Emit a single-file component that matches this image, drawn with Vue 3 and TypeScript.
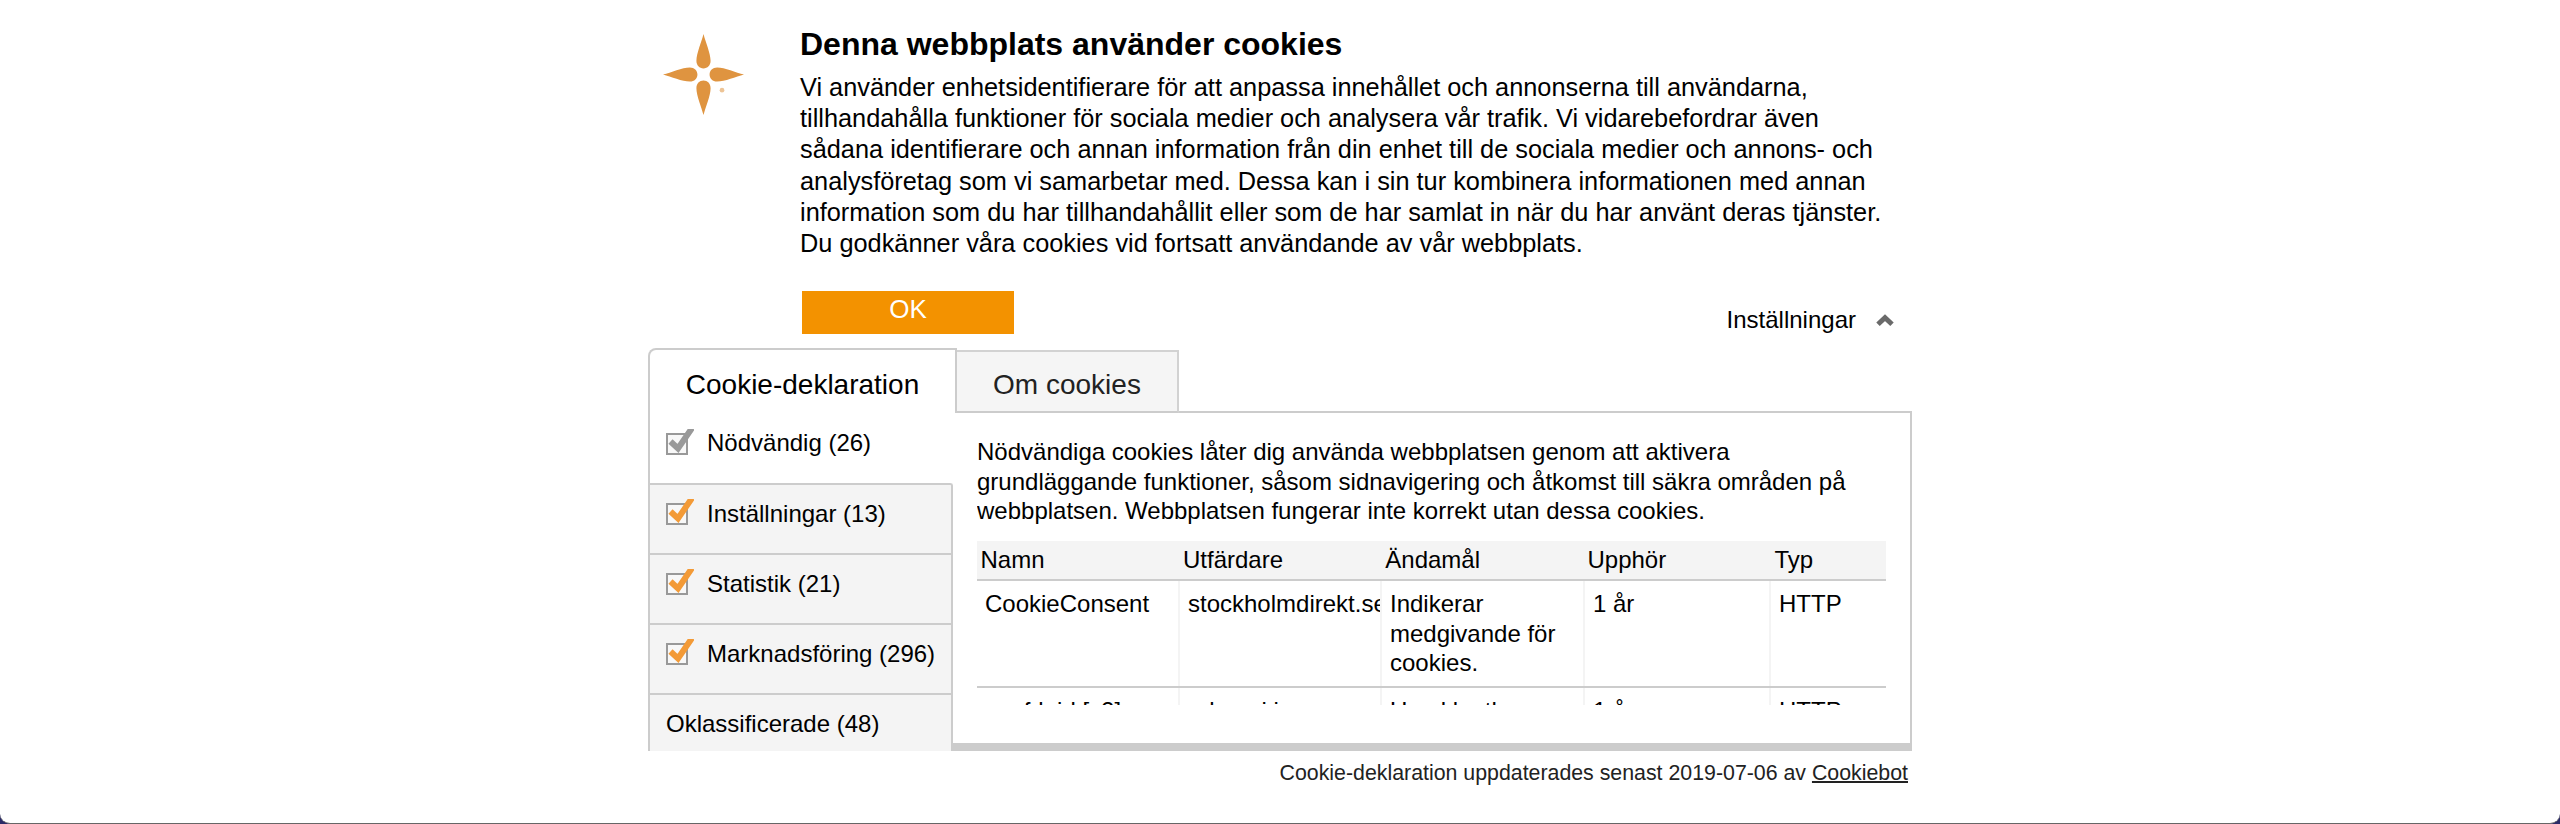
<script setup lang="ts">
interface Category {
  label: string
  state: 'locked' | 'checked' | 'none'
}

const intro: string[] = [
  'Vi använder enhetsidentifierare för att anpassa innehållet och annonserna till användarna,',
  'tillhandahålla funktioner för sociala medier och analysera vår trafik. Vi vidarebefordrar även',
  'sådana identifierare och annan information från din enhet till de sociala medier och annons- och',
  'analysföretag som vi samarbetar med. Dessa kan i sin tur kombinera informationen med annan',
  'information som du har tillhandahållit eller som de har samlat in när du har använt deras tjänster.',
  'Du godkänner våra cookies vid fortsatt användande av vår webbplats.',
]

const categories: Category[] = [
  { label: 'Nödvändig (26)', state: 'locked' },
  { label: 'Inställningar (13)', state: 'checked' },
  { label: 'Statistik (21)', state: 'checked' },
  { label: 'Marknadsföring (296)', state: 'checked' },
  { label: 'Oklassificerade (48)', state: 'none' },
]

const description: string[] = [
  'Nödvändiga cookies låter dig använda webbplatsen genom att aktivera',
  'grundläggande funktioner, såsom sidnavigering och åtkomst till säkra områden på',
  'webbplatsen. Webbplatsen fungerar inte korrekt utan dessa cookies.',
]

const columns: string[] = ['Namn', 'Utfärdare', 'Ändamål', 'Upphör', 'Typ']
const rows: string[][] = [
  ['CookieConsent', 'stockholmdirekt.se', 'Indikerar medgivande för cookies.', '1 år', 'HTTP'],
  ['__cfduid [x2]', 'adnami.io', 'Used by the', '1 år', 'HTTP'],
]
</script>

<template>
  <div class="page">
    <div class="dialog">
      <header class="top">
        <svg class="logo" viewBox="0 0 80 80">
          <g fill="#df9440">
            <path d="M40 0C42 8 47 19 47 26.500C47 31 44 34 40 34S33 31 33 26.500C33 19 38 8 40 0Z" />
            <path d="M40 80C42 72 47 61 47 53.500C47 49 44 46 40 46S33 49 33 53.500C33 61 38 72 40 80Z" />
            <path d="M0 40C8 38 19 33 26.500 33C31 33 34 36 34 40S31 47 26.500 47C19 47 8 42 0 40Z" />
            <path d="M80 40C72 38 61 33 53.500 33C49 33 46 36 46 40S49 47 53.500 47C61 47 72 42 80 40Z" />
            <circle cx="58.300" cy="55.500" r="2.300" opacity=".55" />
          </g>
        </svg>
        <div class="intro">
          <h1>Denna webbplats använder cookies</h1>
          <p><span v-for="line in intro" :key="line" class="line">{{ line }}</span></p>
        </div>
      </header>
      <div class="actions">
        <button class="ok">OK</button>
        <a class="toggle">Inställningar
          <svg viewBox="0 0 20 14"><path d="M3 11.200L10 4.600L17 11.200" fill="none" stroke="#6a6a6a" stroke-width="5" /></svg>
        </a>
      </div>
      <nav class="tabs">
        <div class="tab active">Cookie-deklaration</div>
        <div class="tab">Om cookies</div>
      </nav>
      <section class="body">
        <ul class="categories">
          <li v-for="c in categories" :key="c.label" :class="c.state">
            <svg v-if="c.state !== 'none'" class="check" viewBox="0 0 28 26">
              <rect x="1" y="5" width="20" height="20" fill="#f8f8f8" stroke="#999" stroke-width="2" />
              <path class="tick" d="M4.500 12.500L12 19.500L26 -1" fill="none" stroke-width="6" />
            </svg>
            <span>{{ c.label }}</span>
          </li>
        </ul>
        <div class="detail">
          <div class="scroll">
            <p><span v-for="line in description" :key="line" class="line">{{ line }}</span></p>
            <div class="grid head"><span v-for="c in columns" :key="c">{{ c }}</span></div>
            <div v-for="r in rows" :key="r[0]" class="grid row">
              <span v-for="(cell, i) in r" :key="i">{{ cell }}</span>
            </div>
          </div>
        </div>
      </section>
      <footer>Cookie-deklaration uppdaterades senast 2019-07-06 av <a>Cookiebot</a></footer>
    </div>
  </div>
</template>

<style>
body {
  margin: 0;
  background: #2c2b68;
}
</style>

<style scoped>
.page {
  box-sizing: border-box;
  height: 824px;
  overflow: hidden;
  background: #fff;
  border-bottom: 1px solid #666;
  border-radius: 0 0 10px 10px;
  font: 24px/29.5px "Liberation Sans", Arial, sans-serif;
  color: #000;
}
.dialog {
  width: 1264px;
  margin: 0 auto;
}
.top {
  display: flex;
  height: 291px;
}
.logo {
  width: 81px;
  height: 81px;
  margin: 34px 0 0 15px;
  flex: none;
}
.intro {
  margin-left: 56px;
}
h1 {
  margin: 26px 0 0;
  font-size: 32px;
  line-height: 36px;
  white-space: nowrap;
}
.intro p {
  margin: 10px 0 0;
  font-size: 25.33px;
  line-height: 31.2px;
}
.line {
  display: block;
  white-space: nowrap;
}
.actions {
  display: flex;
  justify-content: space-between;
  height: 57px;
}
.ok {
  width: 212px;
  height: 43px;
  margin-left: 154px;
  padding: 0 0 6px;
  border: 0;
  background: #f39200;
  color: #fff;
  font: 26px/37px "Liberation Sans", Arial, sans-serif;
}
.toggle {
  display: flex;
  align-items: center;
  gap: 19px;
  height: 30px;
  margin: 14px 17px 0 0;
}
.toggle svg {
  width: 20px;
  height: 14px;
}
.tabs {
  display: flex;
  height: 65px;
  align-items: flex-end;
}
.tab {
  box-sizing: border-box;
  width: 222px;
  height: 63px;
  border: 2px solid #d2d2d2;
  border-left: 0;
  border-bottom-color: #ccc;
  background: #f5f5f5;
  color: #222;
  font-size: 28px;
  line-height: 66px;
  text-align: center;
}
.tab.active {
  width: 309px;
  height: 65px;
  border: 2px solid #ccc;
  border-bottom: 0;
  border-radius: 8px 0 0;
  background: #fff;
  color: #000;
  line-height: 70px;
}
.tabs::after {
  content: "";
  flex: 1;
  height: 2px;
  background: #ccc;
}
.body {
  display: flex;
  height: 338px;
}
.categories {
  box-sizing: border-box;
  width: 305px;
  height: 338px;
  margin: 0;
  padding: 0;
  overflow: hidden;
  list-style: none;
  border-left: 2px solid #ccc;
}
li {
  box-sizing: border-box;
  display: flex;
  align-items: center;
  height: 70px;
  padding: 0 0 11px 16px;
  border-top: 2px solid #ccc;
  border-right: 2px solid #ccc;
  background: #f4f4f4;
  white-space: nowrap;
}
li.checked:nth-child(2) {
  border-top-right-radius: 3px;
}
li.locked {
  padding-bottom: 10px;
  border: 0;
  background: #fff;
}
.check {
  width: 28px;
  height: 26px;
  margin: -3px 13px 0 0;
}
.tick {
  stroke: #f39a36;
}
.locked .tick {
  stroke: #999;
}
.detail {
  box-sizing: border-box;
  width: 959px;
  padding: 24px 0 0 24px;
  border: solid #ccc;
  border-width: 0 2px 8px 0;
}
.scroll {
  height: 268px;
  overflow: hidden;
}
.detail p {
  margin: 0 0 15.5px;
}
.grid {
  display: grid;
  grid-template-columns: 203px 202px 203px 186px 115px;
  width: 909px;
  border-bottom: 2px solid #ccc;
}
.head {
  grid-template-columns: 202.5px 202.3px 202.2px 187px 115px;
  height: 38px;
  background: #f4f4f4;
  line-height: 38px;
}
.head span {
  padding-left: 3.5px;
}
.row {
  height: 105px;
}
.row span {
  padding: 8px 4px 0 8px;
  overflow: hidden;
  border-right: 2px solid #f4f4f4;
}
.row span:last-child {
  border: 0;
}
footer {
  padding: 8px 4px 0;
  font-size: 21.33px;
  line-height: 28px;
  text-align: right;
  color: #222;
}
footer a {
  text-decoration: underline;
  text-decoration-thickness: 2px;
}
</style>
